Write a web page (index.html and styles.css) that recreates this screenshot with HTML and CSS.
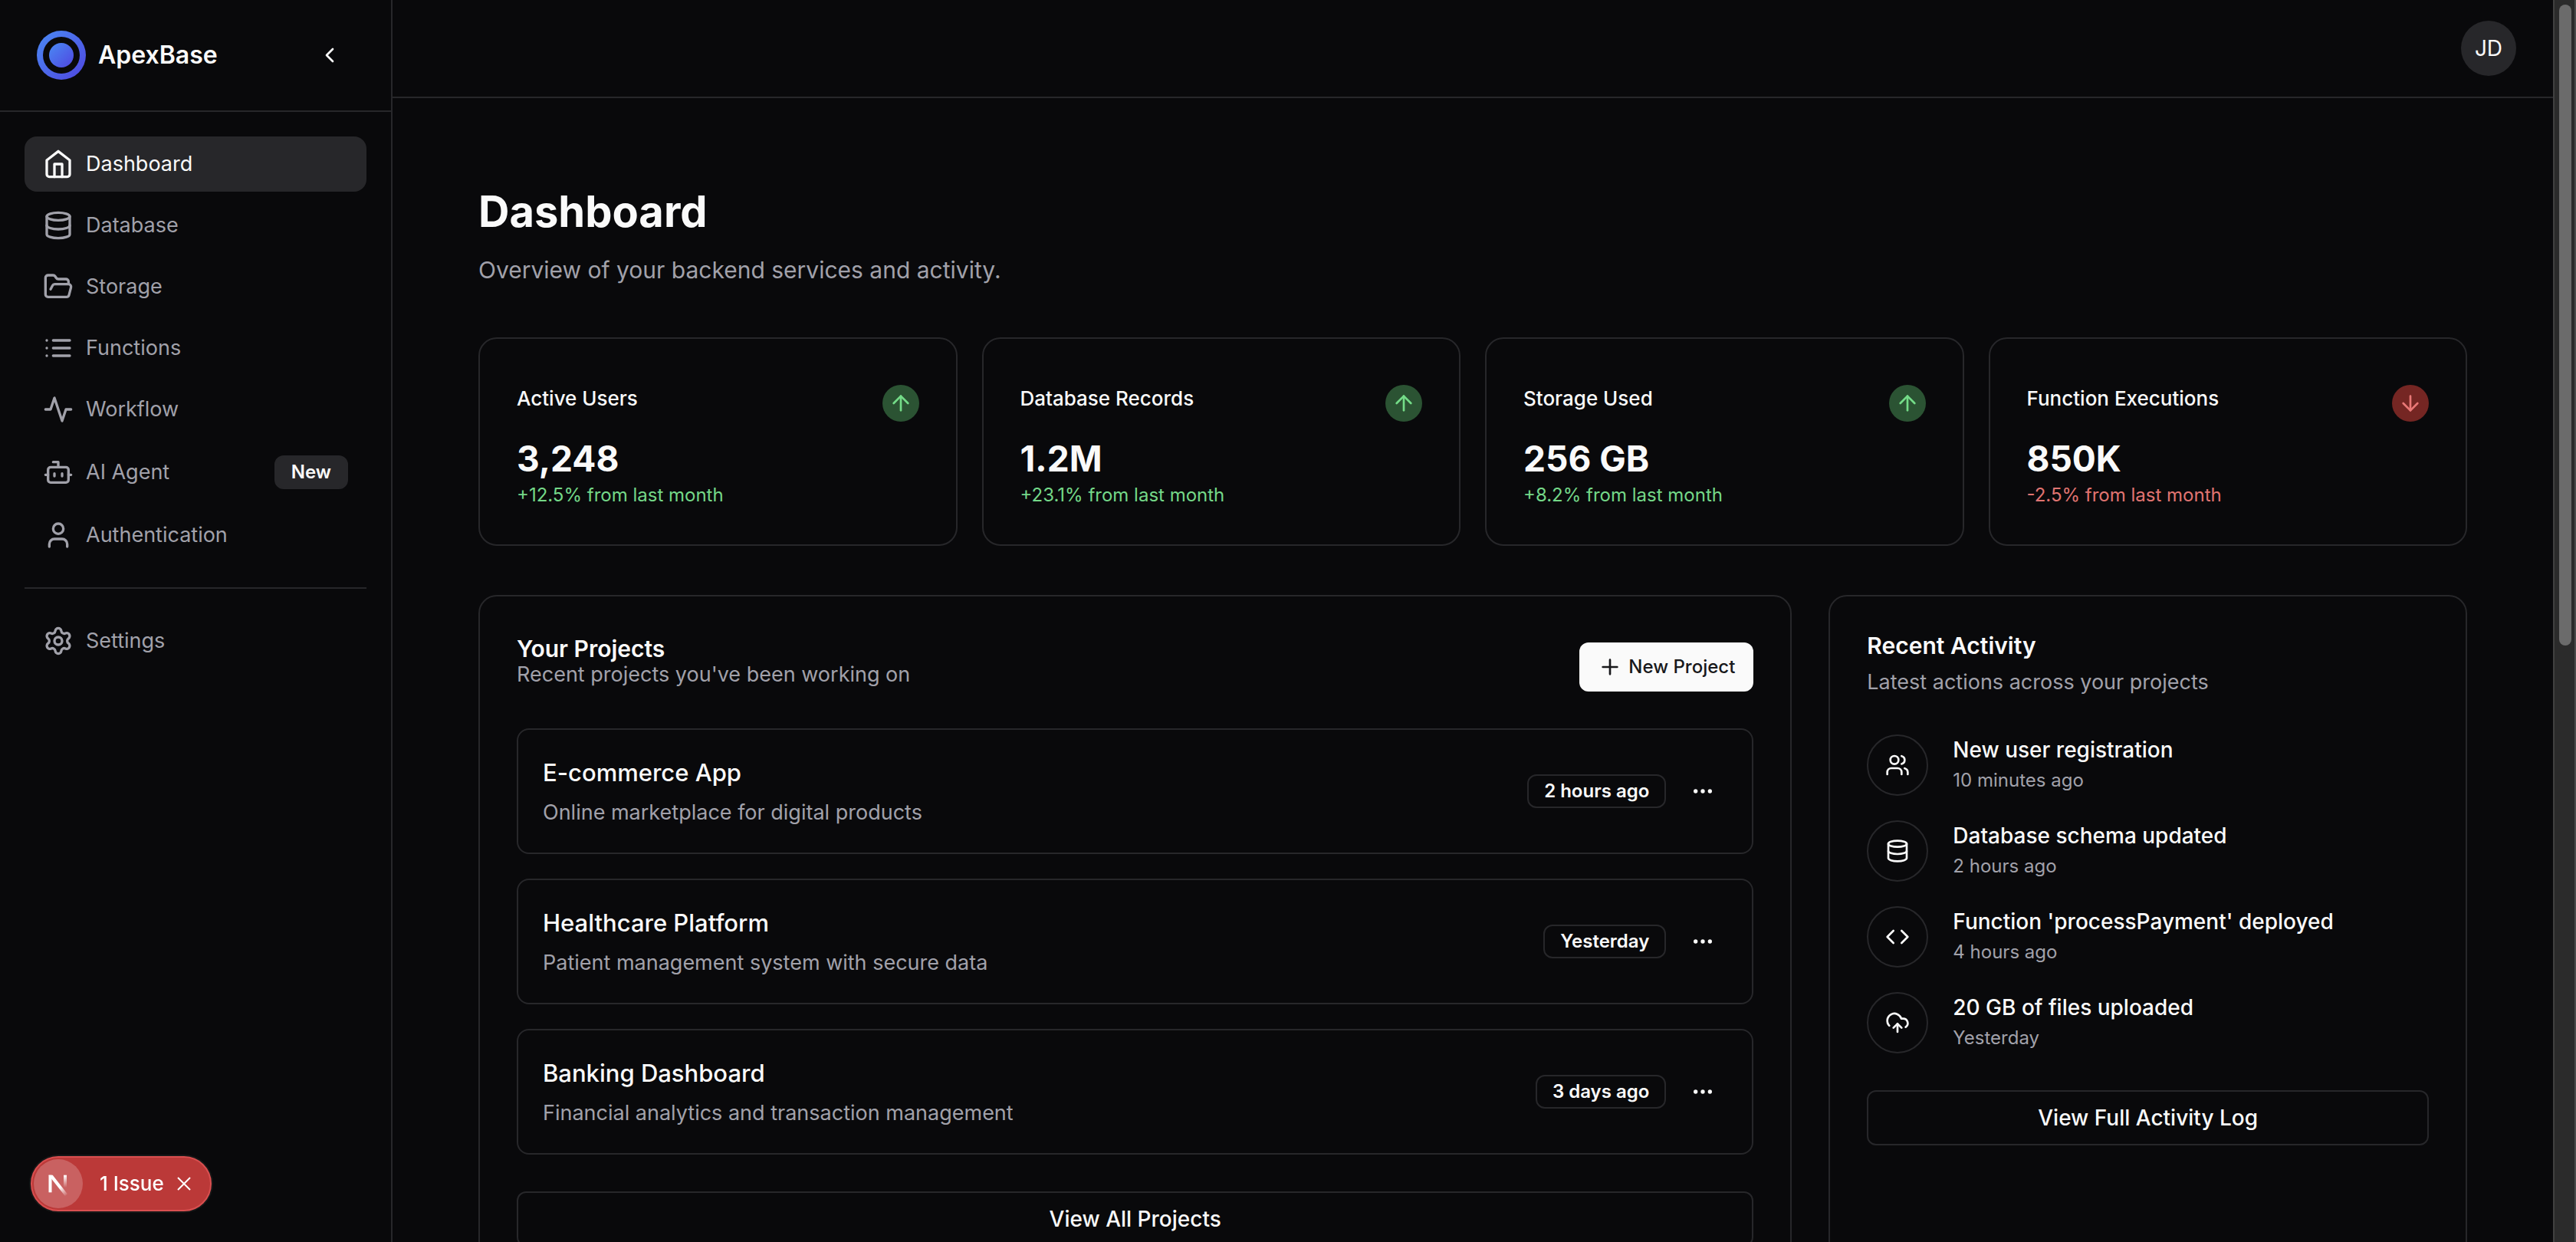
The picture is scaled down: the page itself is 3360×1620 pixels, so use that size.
FILE: index.html
```html
<!DOCTYPE html>
<html lang="en">
<head>
<meta charset="utf-8">
<meta name="viewport" content="width=device-width, initial-scale=1">
<title>ApexBase</title>
<link rel="stylesheet" href="styles.css">
</head>
<body>
<svg class="sprite" aria-hidden="true">
  <symbol id="database" viewBox="0 0 24 24"><ellipse cx="12" cy="5" rx="9" ry="3"/><path d="M3 5V19A9 3 0 0 0 21 19V5"/><path d="M3 12A9 3 0 0 0 21 12"/></symbol>
  <symbol id="arrow-up" viewBox="0 0 24 24"><path d="m5 12 7-7 7 7"/><path d="M12 19V5"/></symbol>
  <symbol id="arrow-down" viewBox="0 0 24 24"><path d="M12 5v14"/><path d="m19 12-7 7-7-7"/></symbol>
  <symbol id="dots" viewBox="0 0 24 24"><circle cx="12" cy="12" r="1"/><circle cx="19" cy="12" r="1"/><circle cx="5" cy="12" r="1"/></symbol>
</svg>
<div class="app">
  <aside class="sidebar">
    <div class="brand">
      <svg class="logo" viewBox="0 0 64 64" aria-hidden="true">
        <defs><linearGradient id="ring" x1="0" y1="0" x2="1" y2="1"><stop offset="0" stop-color="#4a8af4"/><stop offset="1" stop-color="#4f46e0"/></linearGradient></defs>
        <circle cx="32" cy="32" r="32" fill="url(#ring)"/><circle cx="32" cy="32" r="24" fill="#09090b"/><circle cx="32" cy="32" r="16" fill="url(#ring)"/>
      </svg>
      <span class="brand-name">ApexBase</span>
      <button class="icon-button" type="button" aria-label="Collapse sidebar"><svg class="icon icon-small" viewBox="0 0 24 24"><path d="m15 18-6-6 6-6"/></svg></button>
    </div>
    <nav class="nav">
      <a class="nav-item active" href="#"><svg class="icon" viewBox="0 0 24 24"><path d="m3 9 9-7 9 7v11a2 2 0 0 1-2 2H5a2 2 0 0 1-2-2z"/><path d="M9 22V12h6v10"/></svg>Dashboard</a>
      <a class="nav-item" href="#"><svg class="icon"><use href="#database"/></svg>Database</a>
      <a class="nav-item" href="#"><svg class="icon" viewBox="0 0 24 24"><path d="m6 14 1.5-2.9A2 2 0 0 1 9.24 10H20a2 2 0 0 1 1.94 2.5l-1.54 6a2 2 0 0 1-1.95 1.5H4a2 2 0 0 1-2-2V5a2 2 0 0 1 2-2h3.9a2 2 0 0 1 1.69.9l.81 1.2a2 2 0 0 0 1.67.9H18a2 2 0 0 1 2 2v2"/></svg>Storage</a>
      <a class="nav-item" href="#"><svg class="icon" viewBox="0 0 24 24"><path d="M8 6h13M8 12h13M8 18h13M3 6h.01M3 12h.01M3 18h.01"/></svg>Functions</a>
      <a class="nav-item" href="#"><svg class="icon" viewBox="0 0 24 24"><path d="M22 12h-4l-3 9L9 3l-3 9H2"/></svg>Workflow</a>
      <a class="nav-item" href="#"><svg class="icon" viewBox="0 0 24 24"><path d="M12 8V4H8"/><rect width="16" height="12" x="4" y="8" rx="2"/><path d="M2 14h2M20 14h2M15 13v2M9 13v2"/></svg>AI Agent<span class="badge badge-filled">New</span></a>
      <a class="nav-item" href="#"><svg class="icon" viewBox="0 0 24 24"><path d="M19 21v-2a4 4 0 0 0-4-4H9a4 4 0 0 0-4 4v2"/><circle cx="12" cy="7" r="4"/></svg>Authentication</a>
      <hr class="nav-rule">
      <a class="nav-item" href="#"><svg class="icon" viewBox="0 0 24 24"><path d="M9.671 4.136a2.34 2.34 0 0 1 4.659 0 2.34 2.34 0 0 0 3.319 1.915 2.34 2.34 0 0 1 2.33 4.033 2.34 2.34 0 0 0 0 3.831 2.34 2.34 0 0 1-2.33 4.033 2.34 2.34 0 0 0-3.319 1.915 2.34 2.34 0 0 1-4.659 0 2.34 2.34 0 0 0-3.32-1.915 2.34 2.34 0 0 1-2.33-4.033 2.34 2.34 0 0 0 0-3.831A2.34 2.34 0 0 1 6.35 6.051a2.34 2.34 0 0 0 3.319-1.915"/><circle cx="12" cy="12" r="3"/></svg>Settings</a>
    </nav>
  </aside>

  <div class="page">
    <header class="topbar"><button class="avatar" type="button" aria-label="Account">JD</button></header>
    <main class="content">
      <h1 class="page-title">Dashboard</h1>
      <p class="page-lead">Overview of your backend services and activity.</p>

      <section class="stats" aria-label="Statistics">
        <article class="card stat">
          <div class="stat-head"><h2 class="stat-title">Active Users</h2><span class="trend up"><svg class="icon icon-small"><use href="#arrow-up"/></svg></span></div>
          <p class="stat-value">3,248</p><p class="stat-delta up-text">+12.5% from last month</p>
        </article>
        <article class="card stat">
          <div class="stat-head"><h2 class="stat-title">Database Records</h2><span class="trend up"><svg class="icon icon-small"><use href="#arrow-up"/></svg></span></div>
          <p class="stat-value">1.2M</p><p class="stat-delta up-text">+23.1% from last month</p>
        </article>
        <article class="card stat">
          <div class="stat-head"><h2 class="stat-title">Storage Used</h2><span class="trend up"><svg class="icon icon-small"><use href="#arrow-up"/></svg></span></div>
          <p class="stat-value">256 GB</p><p class="stat-delta up-text">+8.2% from last month</p>
        </article>
        <article class="card stat">
          <div class="stat-head"><h2 class="stat-title">Function Executions</h2><span class="trend down"><svg class="icon icon-small"><use href="#arrow-down"/></svg></span></div>
          <p class="stat-value">850K</p><p class="stat-delta down-text">-2.5% from last month</p>
        </article>
      </section>

      <div class="panels">
        <section class="card projects">
          <div class="projects-head">
            <div><h2 class="card-title">Your Projects</h2><p class="card-note compact">Recent projects you've been working on</p></div>
            <button class="primary-button" type="button"><svg class="icon icon-small" viewBox="0 0 24 24"><path d="M5 12h14M12 5v14"/></svg>New Project</button>
          </div>
          <ul class="project-list">
            <li class="project">
              <div class="project-text"><h3 class="project-name">E-commerce App</h3><p class="card-note">Online marketplace for digital products</p></div>
              <span class="badge">2 hours ago</span>
              <button class="icon-button" type="button" aria-label="E-commerce App options"><svg class="icon icon-small"><use href="#dots"/></svg></button>
            </li>
            <li class="project">
              <div class="project-text"><h3 class="project-name">Healthcare Platform</h3><p class="card-note">Patient management system with secure data</p></div>
              <span class="badge">Yesterday</span>
              <button class="icon-button" type="button" aria-label="Healthcare Platform options"><svg class="icon icon-small"><use href="#dots"/></svg></button>
            </li>
            <li class="project">
              <div class="project-text"><h3 class="project-name">Banking Dashboard</h3><p class="card-note">Financial analytics and transaction management</p></div>
              <span class="badge">3 days ago</span>
              <button class="icon-button" type="button" aria-label="Banking Dashboard options"><svg class="icon icon-small"><use href="#dots"/></svg></button>
            </li>
          </ul>
          <button class="outline-button" type="button">View All Projects</button>
        </section>

        <section class="card activity">
          <h2 class="card-title">Recent Activity</h2>
          <p class="card-note spaced">Latest actions across your projects</p>
          <ul class="activity-list">
            <li class="event">
              <span class="event-icon"><svg class="icon icon-small" viewBox="0 0 24 24"><path d="M16 21v-2a4 4 0 0 0-4-4H6a4 4 0 0 0-4 4v2"/><circle cx="9" cy="7" r="4"/><path d="M22 21v-2a4 4 0 0 0-3-3.87"/><path d="M16 3.13a4 4 0 0 1 0 7.75"/></svg></span>
              <div><p class="event-title">New user registration</p><p class="event-time">10 minutes ago</p></div>
            </li>
            <li class="event">
              <span class="event-icon"><svg class="icon icon-small"><use href="#database"/></svg></span>
              <div><p class="event-title">Database schema updated</p><p class="event-time">2 hours ago</p></div>
            </li>
            <li class="event">
              <span class="event-icon"><svg class="icon icon-small" viewBox="0 0 24 24"><path d="m16 18 6-6-6-6"/><path d="m8 6-6 6 6 6"/></svg></span>
              <div><p class="event-title">Function 'processPayment' deployed</p><p class="event-time">4 hours ago</p></div>
            </li>
            <li class="event">
              <span class="event-icon"><svg class="icon icon-small" viewBox="0 0 24 24"><path d="M12 13v8"/><path d="M4 14.899A7 7 0 1 1 15.71 8h1.79a4.5 4.5 0 0 1 2.5 8.242"/><path d="m8 17 4-4 4 4"/></svg></span>
              <div><p class="event-title">20 GB of files uploaded</p><p class="event-time">Yesterday</p></div>
            </li>
          </ul>
          <button class="outline-button" type="button">View Full Activity Log</button>
        </section>
      </div>
    </main>
  </div>
  <div class="scrollbar" aria-hidden="true"><div class="scroll-thumb"></div></div>
</div>

<div class="issue">
  <span class="issue-mark"><svg class="issue-logo" viewBox="0 0 64 64" aria-hidden="true">
    <defs>
      <linearGradient id="fade-diagonal" gradientUnits="userSpaceOnUse" x1="34" y1="37" x2="43" y2="48"><stop offset="0" stop-color="#fff"/><stop offset="1" stop-color="#fff" stop-opacity="0"/></linearGradient>
      <linearGradient id="fade-bar" gradientUnits="userSpaceOnUse" x1="41" y1="21" x2="41" y2="37"><stop offset="0" stop-color="#fff"/><stop offset="1" stop-color="#fff" stop-opacity="0"/></linearGradient>
    </defs>
    <path fill="#fff" d="M19.5 20.7h4v22.6h-4z"/><path fill="url(#fade-diagonal)" d="M19.5 20.7h5.2L44 45.500l-3.200 2.500-21.300-27z"/><path fill="url(#fade-bar)" d="M39 20.700h4v16.300h-4z"/>
  </svg></span>
  <button class="issue-open" type="button">1 Issue</button>
  <button class="issue-close" type="button" aria-label="Dismiss"><svg class="issue-cross" viewBox="0 0 20 20"><path d="M2 2l16 16M18 2 2 18"/></svg></button>
</div>
</body>
</html>
```
FILE: styles.css
```css
:root {
  --bg: #09090b;
  --line: #27272a;
  --text: #fafafa;
  --muted: #a1a1aa;
}

* { box-sizing: border-box; }

html, body { height: 100%; margin: 0; }

body {
  overflow: hidden;
  background: var(--bg);
  color: var(--text);
  font-family: Inter, "Liberation Sans", sans-serif;
  font-size: 28px;
  line-height: 40px;
}

h1, h2, h3, p, ul { margin: 0; padding: 0; }
ul { list-style: none; }
button { padding: 0; border: 0; background: none; color: inherit; font: inherit; }
a { color: inherit; text-decoration: none; }

.sprite { display: none; }

.icon {
  flex: none;
  width: 40px;
  height: 40px;
  fill: none;
  stroke: currentColor;
  stroke-width: 2;
  stroke-linecap: round;
  stroke-linejoin: round;
}
.icon-small { width: 32px; height: 32px; }

.app {
  display: grid;
  grid-template-columns: 512px minmax(0, 1fr) 30px;
  height: 100vh;
}

/* Sidebar */
.sidebar { border-right: 2px solid var(--line); }

.brand {
  display: flex;
  align-items: center;
  gap: 16px;
  padding: 40px 48px;
  border-bottom: 2px solid var(--line);
}
.logo { width: 64px; height: 64px; }
.brand-name { flex: 1; font-size: 32px; font-weight: 600; }

.icon-button {
  display: flex;
  flex: none;
  align-items: center;
  justify-content: center;
  width: 64px;
  height: 64px;
}

.nav { display: flex; flex-direction: column; gap: 8px; padding: 32px; }
.nav-item {
  display: flex;
  align-items: center;
  gap: 16px;
  padding: 16px 24px;
  border-radius: 16px;
  color: var(--muted);
  font-size: 27px;
}
.nav-item.active { background: var(--line); color: var(--text); }
.nav-rule { width: 100%; height: 2px; margin: 24px 0; border: 0; background: var(--line); }

.badge {
  padding: 4px 20px;
  border: 2px solid var(--line);
  border-radius: 12px;
  color: var(--text);
  font-size: 24px;
  font-weight: 600;
  line-height: 32px;
  white-space: nowrap;
}
.badge-filled { margin-left: auto; background: var(--line); }

/* Top bar */
.page { min-width: 0; overflow: hidden; }
.topbar {
  display: flex;
  align-items: center;
  justify-content: flex-end;
  height: 128px;
  padding: 0 48px;
  border-bottom: 2px solid var(--line);
}
.avatar { width: 72px; height: 72px; border-radius: 50%; background: var(--line); }

/* Content */
.content { padding: 112px; }
.page-title { font-size: 56px; font-weight: 700; line-height: 72px; }
.page-lead { margin-top: 16px; color: var(--muted); font-size: 30px; line-height: 48px; }

.card { padding: 48px; border: 2px solid var(--line); border-radius: 24px; }

.stats {
  display: grid;
  grid-template-columns: repeat(4, minmax(0, 1fr));
  gap: 32px;
  margin-top: 64px;
}
.stat-head { display: flex; align-items: flex-start; justify-content: space-between; padding-top: 12px; }
.stat-title { font-size: 26px; font-weight: 500; line-height: 36px; }
.trend {
  display: flex;
  align-items: center;
  justify-content: center;
  width: 48px;
  height: 48px;
  border-radius: 50%;
}
.up { background: #2b5333; color: #74dc88; }
.down { background: #752623; color: #e97876; }
.up-text { color: #74d888; }
.down-text { color: #e07471; }
.stat-value { margin-top: 16px; font-size: 46px; font-weight: 700; line-height: 64px; }
.stat-delta { font-size: 24px; line-height: 32px; }

.panels {
  display: grid;
  grid-template-columns: repeat(3, minmax(0, 1fr));
  gap: 48px;
  margin-top: 64px;
}
.projects { grid-column: span 2; }
.projects-head { display: flex; align-items: flex-start; justify-content: space-between; padding-top: 4px; }
.card-title { font-size: 30px; font-weight: 600; line-height: 32px; }
.card-note { color: var(--muted); font-size: 27px; }
.compact { line-height: 36px; }
.spaced { margin-top: 12px; }

.primary-button {
  display: flex;
  align-items: center;
  gap: 8px;
  height: 64px;
  margin-top: 8px;
  padding: 0 24px;
  border-radius: 12px;
  background: var(--text);
  color: #18181b;
  font-size: 24px;
  font-weight: 500;
}

.project-list { display: grid; gap: 32px; margin: 48px 0; }
.project {
  display: flex;
  align-items: center;
  gap: 16px;
  padding: 32px;
  border: 2px solid var(--line);
  border-radius: 16px;
}
.project-text { flex: 1; display: grid; gap: 8px; }
.project-name { font-size: 31px; font-weight: 500; line-height: 48px; }

.outline-button {
  width: 100%;
  height: 72px;
  border: 2px solid var(--line);
  border-radius: 12px;
  font-weight: 500;
}

.activity-list { display: grid; gap: 32px; margin: 48px 0; }
.event { display: flex; gap: 32px; }
.event-icon {
  display: flex;
  flex: none;
  align-items: center;
  justify-content: center;
  width: 80px;
  height: 80px;
  border: 2px solid var(--line);
  border-radius: 50%;
}
.event-title { font-weight: 500; }
.event-time { margin-top: 4px; color: var(--muted); font-size: 24px; line-height: 32px; }

/* Page scrollbar */
.scrollbar {
  padding: 6px 4px 6px 6px;
  border-right: 2px solid #4a4a4a;
  border-left: 2px solid #404040;
  background: #2b2b2b;
}
.scroll-thumb { width: 16px; height: 52%; border-radius: 8px; background: #6b6b6b; }

/* Development issue pill, floats over the page */
.issue {
  position: fixed;
  bottom: 40px;
  left: 40px;
  display: flex;
  align-items: center;
  height: 72px;
  padding: 2px;
  border: 2px solid #d94f50;
  border-radius: 36px;
  background: #bb3938;
  color: #fff;
  box-shadow: 0 0 0 2px #171717;
}
.issue-mark { width: 64px; height: 64px; border-radius: 50%; background: #c96161; }
.issue-logo { display: block; width: 64px; height: 64px; }
.issue-open { padding-left: 22px; font-size: 26px; font-weight: 500; }
.issue-close { display: flex; padding: 0 22px 0 16px; }
.issue-cross { width: 20px; height: 20px; fill: none; stroke: currentColor; stroke-width: 2; }
```
